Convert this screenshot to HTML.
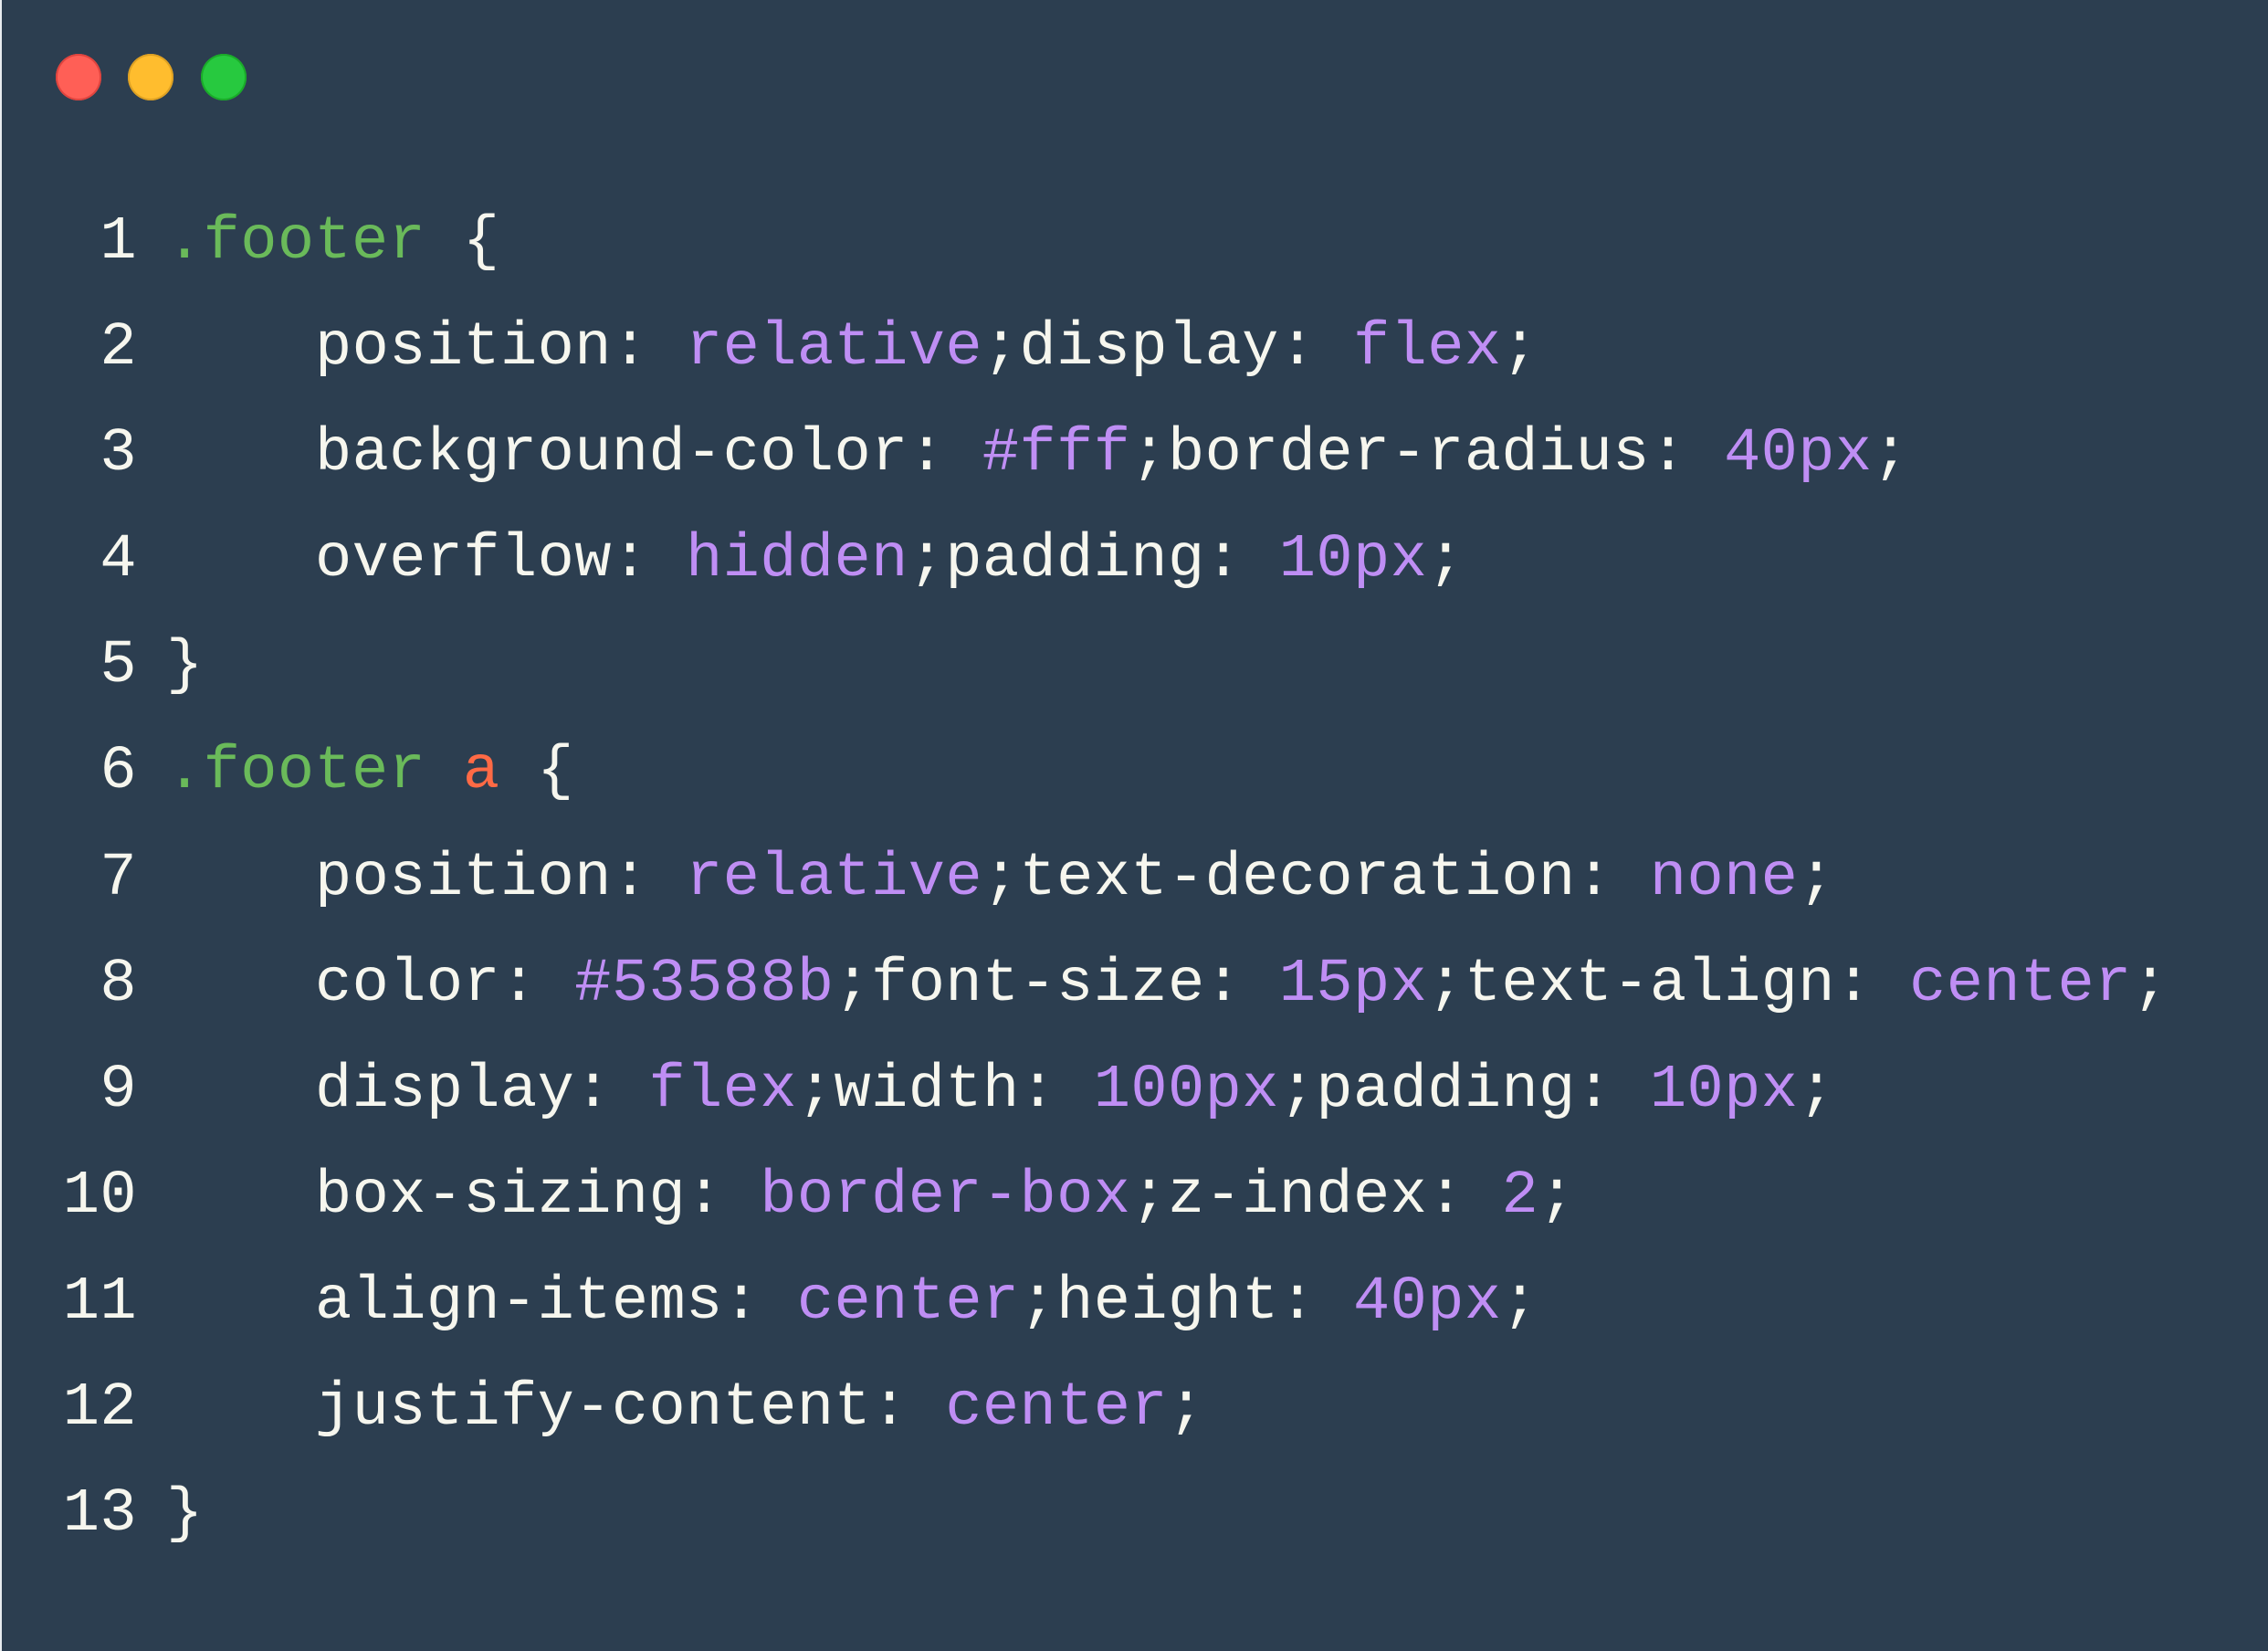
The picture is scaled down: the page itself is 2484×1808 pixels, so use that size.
<!DOCTYPE html>
<html><head><meta charset="utf-8"><style>
html,body{margin:0;padding:0;width:2484px;height:1808px;background:#2c3e50;overflow:hidden}
.strip{position:absolute;left:0;top:0;width:2px;height:1808px;background:#e8ecef}
.dot{position:absolute;top:59px;width:50px;height:51px;border-radius:50%}
.code{position:absolute;left:0;top:207px;width:2484px;font-family:"Liberation Mono",monospace;font-size:67px;line-height:116.1px;color:#f6f6ee;letter-spacing:0.4px}
.row{position:relative;height:116.1px}
.row span{white-space:pre}
.ln{position:absolute;left:0;top:0;width:150px;text-align:right}
.c{position:absolute;left:182px;top:0}
.i{position:absolute;left:345px;top:0}
.g{color:#6aba5a}.p{color:#bf8ef4}.r{color:#ff6a45}
</style></head><body>
<div class="strip"></div>
<div class="dot" style="left:61px;background:#ff5f56;box-shadow:inset 0 0 0 2px #e0443e"></div>
<div class="dot" style="left:140px;background:#ffbd2e;box-shadow:inset 0 0 0 2px #dea123"></div>
<div class="dot" style="left:220px;background:#27c93f;box-shadow:inset 0 0 0 2px #1aab29"></div>
<div class="code"><div class="row"><span class="ln">1</span><span class="c"><span class="g">.footer</span> {</span></div><div class="row"><span class="ln">2</span><span class="i">position: <span class="p">relative</span>;display: <span class="p">flex</span>;</span></div><div class="row"><span class="ln">3</span><span class="i">background-color: <span class="p">#fff</span>;border-radius: <span class="p">40px</span>;</span></div><div class="row"><span class="ln">4</span><span class="i">overflow: <span class="p">hidden</span>;padding: <span class="p">10px</span>;</span></div><div class="row"><span class="ln">5</span><span class="c">}</span></div><div class="row"><span class="ln">6</span><span class="c"><span class="g">.footer</span> <span class="r">a</span> {</span></div><div class="row"><span class="ln">7</span><span class="i">position: <span class="p">relative</span>;text-decoration: <span class="p">none</span>;</span></div><div class="row"><span class="ln">8</span><span class="i">color: <span class="p">#53588b</span>;font-size: <span class="p">15px</span>;text-align: <span class="p">center</span>;</span></div><div class="row"><span class="ln">9</span><span class="i">display: <span class="p">flex</span>;width: <span class="p">100px</span>;padding: <span class="p">10px</span>;</span></div><div class="row"><span class="ln">10</span><span class="i">box-sizing: <span class="p">border-box</span>;z-index: <span class="p">2</span>;</span></div><div class="row"><span class="ln">11</span><span class="i">align-items: <span class="p">center</span>;height: <span class="p">40px</span>;</span></div><div class="row"><span class="ln">12</span><span class="i">justify-content: <span class="p">center</span>;</span></div><div class="row"><span class="ln">13</span><span class="c">}</span></div></div>
</body></html>
